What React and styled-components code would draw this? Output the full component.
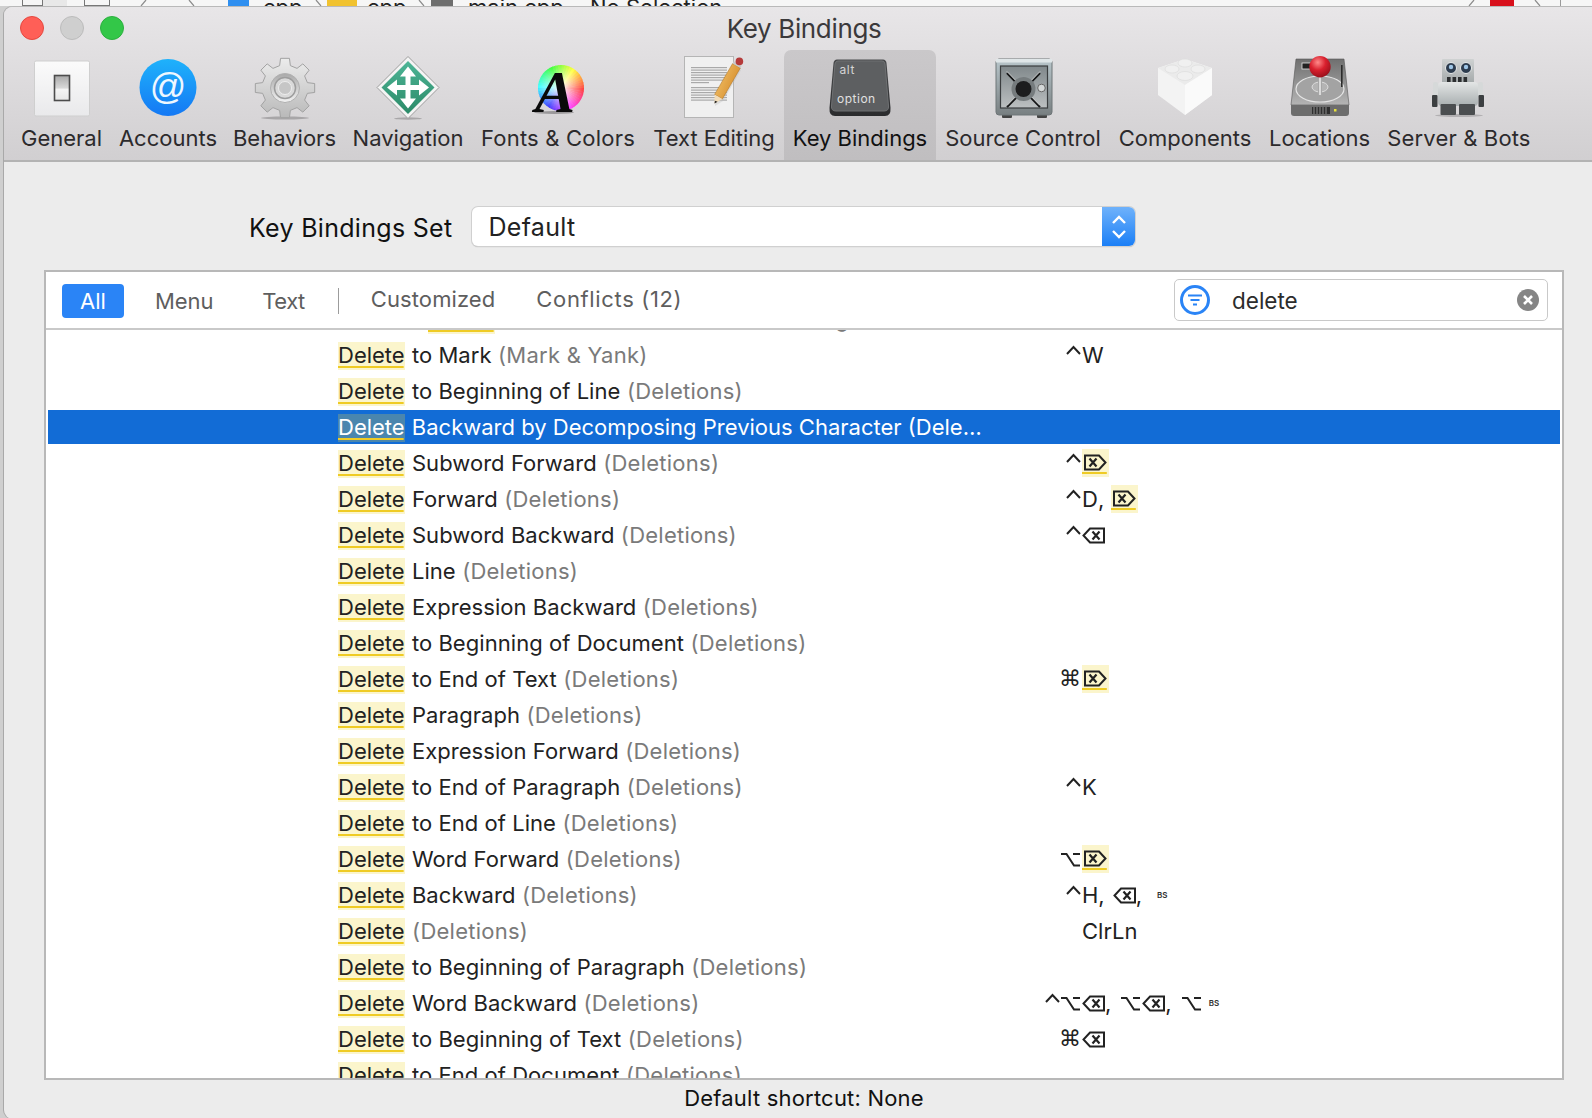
import React from 'react'
import styled, { createGlobalStyle } from 'styled-components'

const UI_FONT = `Inter, "Noto Sans", "Liberation Sans", sans-serif`

const GlobalStyle = createGlobalStyle`
  html, body { margin: 0; padding: 0; }
  body { background: #f6f6f6; font-family: ${UI_FONT}; }
`

const Page = styled.div`
  width: 1592px;
  height: 1118px;
  overflow: hidden;
  background: #cfcfcf;
`

/* the editor behind the preferences window, only its bottom edge shows */
const BehindStrip = styled.div`
  display: flex;
  height: 6px;
  overflow: hidden;
  background: #f6f6f6;
  font-size: 22px;
  color: #222;
`
const PeekText = styled.span`
  flex: none;
  width: ${p => p.$w}px;
  margin: -6px 0 0 ${p => p.$left}px;
  line-height: 26px;
  white-space: nowrap;
`
const PeekBox = styled.span`
  flex: none;
  box-sizing: border-box;
  width: ${p => p.$w}px;
  height: ${p => (p.$outline ? 12 : 6)}px;
  margin-left: ${p => p.$left}px;
  background: ${p => p.$color || 'transparent'};
  border: ${p => (p.$outline ? '1px solid #777' : 'none')};
  margin-top: ${p => (p.$outline ? -6 : 0)}px;
`
const PeekChevron = styled.svg`
  flex: none;
  width: 9px;
  height: 6px;
  margin-left: ${p => p.$left}px;
`

const Window = styled.div`
  margin-left: 4px;
  height: 1112px;
  display: flex;
  flex-direction: column;
  border-radius: 9px 0 0 9px;
  border-top: 1px solid #b9b9b9;
  box-shadow: -1px 0 0 #a9a9a9;
  overflow: hidden;
  background: #ececec;
`

const Header = styled.header`
  flex: none;
  height: 155px;
  box-sizing: border-box;
  border-bottom: 2px solid #b3b3b3;
  background: linear-gradient(#e8e6e8, #d1cfd1);
`
const TitleBar = styled.div`
  position: relative;
  height: 43px;
  padding-left: 12px;
  display: flex;
  align-items: center;
  justify-content: center;
  font-size: 26px;
  letter-spacing: -0.35px;
  color: #3b393b;
`
const Lights = styled.div`
  position: absolute;
  left: 16px;
  top: 9px;
  display: flex;
  gap: 16px;
`
const Light = styled.span`
  width: 24px;
  height: 24px;
  box-sizing: border-box;
  border-radius: 50%;
  background: ${p => p.$color};
  border: 1px solid ${p => p.$edge};
`

const Toolbar = styled.nav`
  display: flex;
  padding-left: 8px;
`
const ToolItem = styled.div`
  flex: none;
  width: ${p => p.$w}px;
  height: 110px;
  box-sizing: border-box;
  padding-top: 6px;
  display: flex;
  flex-direction: column;
  align-items: center;
  border-radius: 7px 7px 0 0;
  background: ${p => (p.$active ? 'linear-gradient(#cac8ca, #c0bec0)' : 'transparent')};
`
const ToolIcon = styled.svg`
  display: block;
  width: 64px;
  height: 64px;
`
const ToolLabel = styled.span`
  margin-top: 4px;
  font-size: 22px;
  line-height: 28px;
  white-space: nowrap;
  letter-spacing: ${p => p.$spacing || 0}px;
  color: ${p => (p.$active ? '#111' : '#2c2a2c')};
`

const Content = styled.main`
  flex: 1;
  min-height: 0;
  display: flex;
  flex-direction: column;
  padding: 45px 28px 0 40px;
`
const SetRow = styled.div`
  display: flex;
  align-items: center;
  padding-left: 205px;
  gap: 20px;
  height: 39px;
`
const SetLabel = styled.label`
  margin-top: 3px;
  font-size: 25px;
  letter-spacing: 0.3px;
  color: #111;
  white-space: nowrap;
`
const Select = styled.div`
  width: 663px;
  height: 39px;
  display: flex;
  border-radius: 6px;
  overflow: hidden;
  background: #fff;
  box-shadow: 0 0 0 1px #d0d0d0, 0 1px 1px #a8a8a8;
`
const SelectValue = styled.span`
  flex: 1;
  padding-left: 16px;
  font-size: 25px;
  letter-spacing: 0.3px;
  line-height: 41px;
  color: #222;
`
const SelectArrows = styled.span`
  width: 33px;
  display: flex;
  align-items: center;
  justify-content: center;
  background: linear-gradient(#6fb2fb, #1b7ff6);
`

const Panel = styled.section`
  flex: none;
  height: 810px;
  margin-top: 24px;
  box-sizing: border-box;
  display: flex;
  flex-direction: column;
  border: 2px solid #b8b8b8;
  background: #fff;
`
const FilterBar = styled.div`
  flex: none;
  height: 58px;
  box-sizing: border-box;
  display: flex;
  align-items: center;
  padding: 1px 14px 0 16px;
  border-bottom: 2px solid #c9c9c9;
`
const FilterAll = styled.span`
  width: 62px;
  height: 34px;
  display: flex;
  align-items: center;
  justify-content: center;
  border-radius: 4px;
  background: #2a84f6;
  color: #fff;
  font-size: 22px;
`
const FilterTab = styled.span`
  margin-left: ${p => p.$left}px;
  font-size: 22px;
  letter-spacing: ${p => p.$spacing || 0}px;
  position: relative;
  top: ${p => p.$top || 0}px;
  color: #5e5e5e;
  white-space: nowrap;
`
const FilterRule = styled.span`
  width: 1px;
  height: 26px;
  margin-left: 33px;
  background: #9c9c9c;
`
const SearchBox = styled.div`
  margin-left: auto;
  margin-top: -1px;
  width: 374px;
  height: 42px;
  box-sizing: border-box;
  display: flex;
  align-items: center;
  padding: 0 8px 0 4px;
  border: 1px solid #c9c9c9;
  border-radius: 5px;
`
const SearchText = styled.span`
  flex: 1;
  margin-left: 21px;
  font-size: 22.5px;
  color: #2c2c2c;
`

const List = styled.div`
  flex: 1;
  min-height: 0;
  overflow: hidden;
  padding: 0 2px;
`
const Rows = styled.div`
  display: flex;
  flex-direction: column;
  gap: 2px;
  margin-top: -28px;
`
const Row = styled.div`
  height: 34px;
  display: grid;
  grid-template-columns: 290px 703px 41px 1fr;
  align-items: center;
  font-size: 22px;
  line-height: 34px;
  white-space: nowrap;
  background: ${p => (p.$selected ? '#126cd6' : 'transparent')};
  color: ${p => (p.$selected ? '#fff' : '#222')};
`
const Name = styled.span`
  grid-column: 2;
  letter-spacing: ${p => (p.$selected ? 0 : 0.05)}px;
`
const Match = styled.span`
  padding-bottom: 2px;
  margin-left: ${p => p.$left || 0}px;
  margin-right: 1px;
  letter-spacing: 0;
  background:
    linear-gradient(#efcb24, #efcb24) 0 calc(100% - 2px) / 98% 2px no-repeat,
    ${p => (p.$selected ? '#4a86ae' : '#fbf5cc')};
`
const Category = styled.span`
  letter-spacing: 0.25px;
  color: #7a7a7a;
`
const Mods = styled.span`
  grid-column: 3;
  display: flex;
  align-items: center;
  justify-content: flex-end;
`
const Keys = styled.span`
  grid-column: 4;
  display: flex;
  align-items: center;
`
const Glyph = styled.span`
  font-family: "DejaVu Sans", sans-serif;
  font-size: ${p => p.$size || 18}px;
  line-height: 1;
`
const Comma = styled.span`
  margin-right: ${p => p.$gap}px;
`
const KeyHighlight = styled.span`
  display: inline-flex;
  align-items: center;
  height: 28px;
  box-sizing: border-box;
  padding: 0 2px 1px;
  background:
    linear-gradient(#efcb24, #efcb24) 0 calc(100% - 3px) / 92% 2px no-repeat,
    #fbf5cc;
`
const TinyKey = styled.span`
  font-size: 8px;
  font-weight: 600;
  margin-left: ${p => p.$left}px;
  color: #333;
`

const Status = styled.footer`
  flex: 1;
  display: flex;
  align-items: center;
  justify-content: center;
  padding: 0 0 4px;
  margin-top: 1px;
  font-size: 22px;
  letter-spacing: 0.2px;
  color: #111;
`

const ForwardDelete = () => (
  <svg width="23" height="17" viewBox="0 0 23 17" fill="none" stroke="#222" strokeWidth="2">
    <path d="M1 1.5H15L21.5 8.5L15 15.5H1Z" />
    <path d="M5.5 4.5L12.5 12.5M12.5 4.5L5.5 12.5" strokeWidth="2.2" />
  </svg>
)
const BackDelete = () => (
  <svg width="23" height="17" viewBox="0 0 23 17" fill="none" stroke="#222" strokeWidth="2">
    <path d="M22 1.5H8L1.5 8.5L8 15.5H22Z" />
    <path d="M10.5 4.5L17.5 12.5M17.5 4.5L10.5 12.5" strokeWidth="2.2" />
  </svg>
)
const OptionGlyph = () => (
  <svg width="19" height="15" viewBox="0 0 19 15" fill="none" stroke="#222" strokeWidth="2" style={{ marginRight: 2 }}>
    <path d="M0 2H5.5L13 13.5H19M12 2H19" />
  </svg>
)
const CtrlGlyph = () => (
  <svg width="17" height="15" viewBox="0 0 17 15" fill="none" stroke="#222" strokeWidth="2" style={{ marginTop: -8 }}>
    <path d="M2 10L8.5 3L15 10" />
  </svg>
)
const CmdGlyph = () => <Glyph $size={22} style={{ marginRight: 1 }}>⌘</Glyph>

const rows = [
  { before: 'Cut and ', beforeGap: 2, name: ' Selected Line and Mark', cat: '(Marking Text)' },
  { name: ' to Mark', cat: '(Mark & Yank)', mods: <CtrlGlyph />, keys: 'W' },
  { name: ' to Beginning of Line', cat: '(Deletions)' },
  { name: ' Backward by Decomposing Previous Character (Dele…', selected: true },
  { name: ' Subword Forward', cat: '(Deletions)', mods: <CtrlGlyph />, keys: <KeyHighlight><ForwardDelete /></KeyHighlight> },
  {
    name: ' Forward',
    cat: '(Deletions)',
    mods: <CtrlGlyph />,
    keys: <>D<Comma $gap={7}>,</Comma><KeyHighlight><ForwardDelete /></KeyHighlight></>,
  },
  { name: ' Subword Backward', cat: '(Deletions)', mods: <CtrlGlyph />, keys: <BackDelete /> },
  { name: ' Line', cat: '(Deletions)' },
  { name: ' Expression Backward', cat: '(Deletions)' },
  { name: ' to Beginning of Document', cat: '(Deletions)' },
  { name: ' to End of Text', cat: '(Deletions)', mods: <CmdGlyph />, keys: <KeyHighlight><ForwardDelete /></KeyHighlight> },
  { name: ' Paragraph', cat: '(Deletions)' },
  { name: ' Expression Forward', cat: '(Deletions)' },
  { name: ' to End of Paragraph', cat: '(Deletions)', mods: <CtrlGlyph />, keys: 'K' },
  { name: ' to End of Line', cat: '(Deletions)' },
  { name: ' Word Forward', cat: '(Deletions)', mods: <OptionGlyph />, keys: <KeyHighlight><ForwardDelete /></KeyHighlight> },
  {
    name: ' Backward',
    cat: '(Deletions)',
    mods: <CtrlGlyph />,
    keys: <>H<Comma $gap={8}>,</Comma><BackDelete /><Comma $gap={0}>,</Comma><TinyKey $left={15}>BS</TinyKey></>,
  },
  { name: '', cat: '(Deletions)', keys: 'ClrLn' },
  { name: ' to Beginning of Paragraph', cat: '(Deletions)' },
  {
    name: ' Word Backward',
    cat: '(Deletions)',
    mods: <><CtrlGlyph /><OptionGlyph /></>,
    keys: (
      <>
        <BackDelete /><Comma $gap={10}>,</Comma>
        <OptionGlyph /><BackDelete /><Comma $gap={10}>,</Comma>
        <OptionGlyph /><TinyKey $left={6}>BS</TinyKey>
      </>
    ),
  },
  { name: ' to Beginning of Text', cat: '(Deletions)', mods: <CmdGlyph />, keys: <BackDelete /> },
  { name: ' to End of Document', cat: '(Deletions)' },
]

const gearPath = (cx, cy, outer, inner, teeth) => {
  const pts = []
  const step = (Math.PI * 2) / teeth
  for (let i = 0; i < teeth; i++) {
    const a = i * step - Math.PI / 2
    const polar = (r, t) => `${(cx + r * Math.cos(t)).toFixed(2)} ${(cy + r * Math.sin(t)).toFixed(2)}`
    pts.push(polar(inner, a - step * 0.3), polar(outer, a - step * 0.19), polar(outer, a + step * 0.19), polar(inner, a + step * 0.3))
  }
  return `M${pts.join('L')}Z`
}

const wedge = (cx, cy, r, a0, a1) => {
  const p = a => `${(cx + r * Math.sin(a)).toFixed(2)} ${(cy - r * Math.cos(a)).toFixed(2)}`
  return `M${cx} ${cy}L${p(a0)}A${r} ${r} 0 0 1 ${p(a1)}Z`
}

const GeneralIcon = () => (
  <ToolIcon viewBox="0 0 64 64">
    <defs>
      <linearGradient id="genBg" x1="0" y1="0" x2="0" y2="1">
        <stop offset="0" stopColor="#fbfbfb" />
        <stop offset="1" stopColor="#e9e9eb" />
      </linearGradient>
      <linearGradient id="genSw" x1="0" y1="0" x2="0" y2="1">
        <stop offset="0" stopColor="#a9a9a9" />
        <stop offset="0.5" stopColor="#d8d8d8" />
        <stop offset="0.55" stopColor="#f4f4f4" />
        <stop offset="1" stopColor="#e6e6e6" />
      </linearGradient>
    </defs>
    <rect x="4.5" y="5" width="55" height="55" rx="1.5" fill="url(#genBg)" stroke="#cfcfcf" />
    <rect x="24.5" y="19.5" width="15" height="25" fill="url(#genSw)" stroke="#4c4c4c" strokeWidth="1.6" />
  </ToolIcon>
)

const AccountsIcon = () => (
  <ToolIcon viewBox="0 0 64 64">
    <defs>
      <linearGradient id="accBg" x1="0" y1="0" x2="0" y2="1">
        <stop offset="0" stopColor="#1fb2fb" />
        <stop offset="1" stopColor="#1478f4" />
      </linearGradient>
    </defs>
    <circle cx="32" cy="31.5" r="28.5" fill="url(#accBg)" />
    <text x="32" y="43" textAnchor="middle" fontFamily="Liberation Sans, sans-serif" fontSize="36" fill="#eef7ff">@</text>
  </ToolIcon>
)

const BehaviorsIcon = () => (
  <ToolIcon viewBox="0 0 64 64">
    <defs>
      <linearGradient id="gearBg" x1="0" y1="0" x2="0" y2="1">
        <stop offset="0" stopColor="#ececec" />
        <stop offset="1" stopColor="#b9b9b9" />
      </linearGradient>
      <linearGradient id="gearIn" x1="0" y1="0" x2="0" y2="1">
        <stop offset="0" stopColor="#a9a9a9" />
        <stop offset="1" stopColor="#f2f2f2" />
      </linearGradient>
    </defs>
    <ellipse cx="32" cy="62" rx="24" ry="1.5" fill="#a8a6a8" />
    <path d={gearPath(32, 32, 30, 23, 8)} fill="url(#gearBg)" stroke="#a2a2a2" />
    <circle cx="32" cy="32" r="14.5" fill="url(#gearIn)" stroke="#b0b0b0" />
    <circle cx="32" cy="32" r="10.5" fill="#d9d9d9" stroke="#9d9d9d" strokeWidth="1.5" />
    <circle cx="32" cy="32" r="6.5" fill="#c6c6c6" stroke="#ededed" />
  </ToolIcon>
)

const NavigationIcon = () => (
  <ToolIcon viewBox="0 0 64 64">
    <defs>
      <linearGradient id="navBg" x1="0" y1="0" x2="0" y2="1">
        <stop offset="0" stopColor="#4db596" />
        <stop offset="1" stopColor="#2b8a68" />
      </linearGradient>
    </defs>
    <ellipse cx="32" cy="62.5" rx="14" ry="1.2" fill="#a8a6a8" />
    <path d="M32 0.5L63 31.5L32 62.5L1 31.5Z" fill="#f4f4f4" stroke="#9c9c9c" />
    <path d="M32 5L58.5 31.5L32 58L5.5 31.5Z" fill="url(#navBg)" />
    <path
      d="M32 10.5L40 20.5H34.5V29H43V23.5L53 31.5L43 39.5V34H34.5V42.5H40L32 52.5L24 42.5H29.5V34H21V39.5L11 31.5L21 23.5V29H29.5V20.5H24Z"
      fill="#fff"
    />
  </ToolIcon>
)

const FontsIcon = () => {
  const wedges = []
  for (let i = 0; i < 48; i++) {
    const a0 = (i / 48) * Math.PI * 2
    const a1 = ((i + 1.2) / 48) * Math.PI * 2
    const hue = (90 - (i / 48) * 360 + 360) % 360
    wedges.push(<path key={i} d={wedge(35, 32, 23, a0, a1)} fill={`hsl(${hue} 100% 62%)`} />)
  }
  return (
    <ToolIcon viewBox="0 0 64 64">
      <defs>
        <radialGradient id="wheelFade">
          <stop offset="0" stopColor="#fff" stopOpacity="0.95" />
          <stop offset="1" stopColor="#fff" stopOpacity="0" />
        </radialGradient>
      </defs>
      {wedges}
      <circle cx="35" cy="32" r="23" fill="url(#wheelFade)" />
      <ellipse cx="28" cy="56.5" rx="20" ry="1.5" fill="#9a989a" />
      <text x="9" y="56" fontFamily="Liberation Serif, serif" fontStyle="italic" fontWeight="700" fontSize="60" fill="#0a0a0a">A</text>
    </ToolIcon>
  )
}

const TextEditingIcon = () => {
  const lines = [11, 13.5, 16, 18.5, 21, 23.5, 26, 31, 33.5, 36, 38.5, 41, 43.5]
  return (
    <ToolIcon viewBox="0 0 64 64">
      <defs>
        <linearGradient id="pencilBody" x1="0" y1="0" x2="1" y2="0.6">
          <stop offset="0" stopColor="#f6cb74" />
          <stop offset="1" stopColor="#d58a28" />
        </linearGradient>
      </defs>
      <rect x="2.5" y="0.5" width="49" height="61" fill="#f0f0f0" stroke="#b5b5b5" />
      {lines.map((y, i) => (
        <rect key={y} x="9" y={y} width={i % 7 === 6 ? 18 : 36} height="1.2" fill="#a9a9a9" />
      ))}
      <path d="M33 50L41 45L59 14L51 9.5L33 40Z" fill="#b9b9b9" opacity="0.35" />
      <path d="M32.6 38.4L40.4 42.9L58.4 12L50.6 7.5Z" fill="url(#pencilBody)" stroke="#a96f20" strokeWidth="0.5" />
      <path d="M32.6 38.4L40.4 42.9L32.5 47.5Z" fill="#f2dcb8" />
      <path d="M32.9 44.8L35.6 45.7L32.5 47.5Z" fill="#222" />
      <path d="M50.6 7.5L58.4 12L59.6 9.8L51.8 5.3Z" fill="#c9c9c9" />
      <circle cx="57.4" cy="5.4" r="3.8" fill="#b53a3a" />
    </ToolIcon>
  )
}

const KeyBindingsIcon = () => (
  <ToolIcon viewBox="0 0 64 64">
    <defs>
      <linearGradient id="keyEdge" x1="0" y1="0" x2="0" y2="1">
        <stop offset="0" stopColor="#4a4b4d" />
        <stop offset="1" stopColor="#2b2c2e" />
      </linearGradient>
    </defs>
    <path d="M9 3.5H55Q58 3.5 58.5 7L62.5 52Q63 60 57 60H7Q1 60 1.5 52L5.5 7Q6 3.5 9 3.5Z" fill="url(#keyEdge)" />
    <path d="M10 5H54Q56.5 5 57 8L60.5 50Q61 55 56 55H8Q3 55 3.5 50L7 8Q7.5 5 10 5Z" fill="#5d5f61" stroke="#6f7173" />
    <text x="11.5" y="18" fontFamily="Inter, sans-serif" fontSize="12" letterSpacing="0.6" fill="#d4d4d4">alt</text>
    <text x="9" y="47" fontFamily="Inter, sans-serif" fontSize="12" letterSpacing="0.5" fill="#e0e0e0">option</text>
  </ToolIcon>
)

const SourceControlIcon = () => (
  <ToolIcon viewBox="0 0 64 64">
    <defs>
      <linearGradient id="safeBg" x1="0" y1="0" x2="0" y2="1">
        <stop offset="0" stopColor="#b9c7cc" />
        <stop offset="1" stopColor="#787f81" />
      </linearGradient>
      <linearGradient id="safeDoor" x1="0" y1="0" x2="0" y2="1">
        <stop offset="0" stopColor="#80888b" />
        <stop offset="1" stopColor="#bcc0c1" />
      </linearGradient>
    </defs>
    <rect x="11" y="58" width="10" height="4" rx="1" fill="#444" />
    <rect x="46" y="58" width="10" height="4" rx="1" fill="#444" />
    <rect x="5" y="3" width="56" height="56" rx="3" fill="url(#safeBg)" stroke="#6f7678" />
    <rect x="5" y="3" width="56" height="3.5" fill="#dfe6e8" />
    <rect x="9.5" y="10" width="47" height="42" fill="url(#safeDoor)" stroke="#3a3d3f" strokeWidth="1.2" />
    <g stroke="#161718" strokeWidth="2.2">
      <path d="M16 17L49 51M49 17L16 51" />
    </g>
    <g stroke="#eef0f0" strokeWidth="0.8">
      <path d="M16 15.5L49 49.5M49 15.5L16 49.5" />
    </g>
    <circle cx="32.5" cy="33" r="12" fill="#767c7e" />
    <circle cx="32.5" cy="33" r="8" fill="#1c1d1e" />
    <circle cx="50.5" cy="32" r="3.8" fill="#d4d8d8" stroke="#666" />
  </ToolIcon>
)

const ComponentsIcon = () => (
  <ToolIcon viewBox="0 0 64 64">
    <path d="M32 3L59 12V39L32 59L5 39V12Z" fill="#f3f3f3" />
    <path d="M5 12L32 29L59 12L32 3Z" fill="#ebebeb" />
    <path d="M32 29V59L59 39V12Z" fill="#fafafa" />
    <g fill="#f0f0f0" stroke="#dcdcdc" strokeWidth="0.7">
      <ellipse cx="32" cy="7" rx="7" ry="4" />
      <ellipse cx="19" cy="13" rx="7" ry="4" />
      <ellipse cx="45" cy="13" rx="7" ry="4" />
      <ellipse cx="32" cy="20" rx="8" ry="4.5" />
    </g>
  </ToolIcon>
)

const LocationsIcon = () => (
  <ToolIcon viewBox="0 0 64 64">
    <defs>
      <linearGradient id="diskBg" x1="0" y1="0" x2="0" y2="1">
        <stop offset="0" stopColor="#6f6f6f" />
        <stop offset="1" stopColor="#b4b4b4" />
      </linearGradient>
      <radialGradient id="ball" cx="0.4" cy="0.3" r="0.8">
        <stop offset="0" stopColor="#ff8a8a" />
        <stop offset="0.45" stopColor="#d9202e" />
        <stop offset="1" stopColor="#8a0d17" />
      </radialGradient>
      <linearGradient id="stick" x1="0" y1="0" x2="1" y2="0">
        <stop offset="0" stopColor="#8c8c8c" />
        <stop offset="0.5" stopColor="#f4f4f4" />
        <stop offset="1" stopColor="#8c8c8c" />
      </linearGradient>
    </defs>
    <path d="M8 3H56L61 49H3Z" fill="url(#diskBg)" stroke="#555" strokeWidth="0.6" />
    <path d="M3 49H61V57Q61 60 58 60H6Q3 60 3 57Z" fill="#6d6d6d" />
    <ellipse cx="32" cy="33" rx="24" ry="13" fill="#a3a3a3" stroke="#e4e4e4" strokeWidth="1.2" />
    <ellipse cx="32" cy="31" rx="8" ry="5" fill="#b4b4b4" stroke="#dcdcdc" />
    <rect x="14" y="7" width="10" height="6" fill="#222" stroke="#e6e6e6" strokeWidth="0.8" />
    <rect x="53" y="9" width="1.6" height="22" fill="#2c2c2c" />
    <rect x="24" y="51" width="18" height="7" fill="#2f2f2f" />
    <g stroke="#8c8c8c" strokeWidth="1">
      <path d="M26 51V58M29 51V58M32 51V58M35 51V58M38 51V58" />
    </g>
    <rect x="46" y="53" width="2.5" height="2.5" fill="#e8e23a" />
    <rect x="30" y="18" width="4" height="21" fill="url(#stick)" />
    <circle cx="32" cy="10.7" r="10.7" fill="url(#ball)" />
  </ToolIcon>
)

const ServerBotsIcon = () => (
  <ToolIcon viewBox="0 0 64 64">
    <defs>
      <linearGradient id="botBody" x1="0" y1="0" x2="0" y2="1">
        <stop offset="0" stopColor="#e4e6e6" />
        <stop offset="1" stopColor="#a8aeaf" />
      </linearGradient>
      <linearGradient id="botHead" x1="0" y1="0" x2="0" y2="1">
        <stop offset="0" stopColor="#cfd2d2" />
        <stop offset="1" stopColor="#a4a9aa" />
      </linearGradient>
    </defs>
    <ellipse cx="32" cy="59.5" rx="24" ry="1.5" fill="#b2b0b2" />
    <rect x="6" y="26" width="5" height="16" rx="2" fill="#d6d9d9" />
    <rect x="51" y="26" width="5" height="16" rx="2" fill="#d6d9d9" />
    <rect x="5" y="39" width="5.5" height="12" rx="1" fill="#3c3f41" />
    <rect x="51.5" y="39" width="5.5" height="12" rx="1" fill="#3c3f41" />
    <rect x="15" y="3" width="32" height="24" rx="1" fill="url(#botHead)" />
    <circle cx="24" cy="12" r="5.5" fill="#2d3c4e" stroke="#e8eaea" strokeWidth="1" />
    <circle cx="39" cy="12" r="5.5" fill="#2d3c4e" stroke="#e8eaea" strokeWidth="1" />
    <circle cx="24" cy="11" r="2.2" fill="#9fc6e6" />
    <circle cx="39" cy="11" r="2.2" fill="#9fc6e6" />
    <g fill="#2c2e30">
      <rect x="20" y="21" width="3.6" height="5" />
      <rect x="25.5" y="21" width="3.6" height="5" />
      <rect x="31" y="21" width="3.6" height="5" />
      <rect x="36.5" y="21" width="3.6" height="5" />
    </g>
    <rect x="11" y="26" width="40" height="24" rx="4" fill="url(#botBody)" />
    <rect x="13.5" y="48" width="15.5" height="11" rx="1" fill="#4b4e50" />
    <rect x="32" y="48" width="16" height="11" rx="1" fill="#4b4e50" />
  </ToolIcon>
)

const tools = [
  { label: 'General', w: 99, Icon: GeneralIcon },
  { label: 'Accounts', w: 114, Icon: AccountsIcon },
  { label: 'Behaviors', w: 119, Icon: BehaviorsIcon },
  { label: 'Navigation', w: 128, Icon: NavigationIcon },
  { label: 'Fonts & Colors', w: 172, Icon: FontsIcon, spacing: 0.2 },
  { label: 'Text Editing', w: 140, Icon: TextEditingIcon },
  { label: 'Key Bindings', w: 152, Icon: KeyBindingsIcon, active: true },
  { label: 'Source Control', w: 174, Icon: SourceControlIcon },
  { label: 'Components', w: 150, Icon: ComponentsIcon },
  { label: 'Locations', w: 119, Icon: LocationsIcon },
  { label: 'Server & Bots', w: 160, Icon: ServerBotsIcon, spacing: 0.15 },
]

const Slash = ({ left, back }) => (
  <PeekChevron $left={left} viewBox="0 0 9 6" fill="none" stroke="#8a8a8a" strokeWidth="1.2">
    <path d={back ? 'M1 0L6 6' : 'M8 0L3 6'} />
  </PeekChevron>
)

const App = () => (
  <Page>
    <GlobalStyle />
    <BehindStrip>
      <PeekBox $left={22} $w={21} $outline />
      <PeekBox $left={0} $w={24} $color="#e8e8e8" />
      <PeekBox $left={17} $w={26} $outline />
      <Slash left={28} />
      <Slash left={41} back />
      <PeekBox $left={31} $w={21} $color="#2f8ff0" />
      <PeekText $left={14} $w={37}>cpp</PeekText>
      <Slash left={15} back />
      <PeekBox $left={3} $w={30} $color="#f1c22f" />
      <PeekText $left={10} $w={36}>cpp</PeekText>
      <Slash left={15} back />
      <PeekBox $left={4} $w={22} $color="#6e6e6e" />
      <PeekText $left={15} $w={106}>main.cpp</PeekText>
      <PeekText $left={16} $w={133}>No Selection</PeekText>
      <Slash left={743} />
      <PeekBox $left={15} $w={24} $color="#d8101c" />
      <Slash left={20} back />
      <PeekBox $left={17} $w={1} $color="#9a9a9a" />
    </BehindStrip>
    <Window>
      <Header>
        <TitleBar>
          <Lights>
            <Light $color="#ff5f57" $edge="#e5483f" />
            <Light $color="#cfcfcf" $edge="#bcbcbc" />
            <Light $color="#33c748" $edge="#2bb03e" />
          </Lights>
          Key Bindings
        </TitleBar>
        <Toolbar>
          {tools.map(({ label, w, Icon, active, spacing }) => (
            <ToolItem key={label} $w={w} $active={active}>
              <Icon />
              <ToolLabel $active={active} $spacing={spacing}>{label}</ToolLabel>
            </ToolItem>
          ))}
        </Toolbar>
      </Header>
      <Content>
        <SetRow>
          <SetLabel>Key Bindings Set</SetLabel>
          <Select>
            <SelectValue>Default</SelectValue>
            <SelectArrows>
              <svg width="18" height="28" viewBox="0 0 18 28" fill="none" stroke="#fff" strokeWidth="2.4">
                <path d="M3 10L9 4L15 10M3 18L9 24L15 18" />
              </svg>
            </SelectArrows>
          </Select>
        </SetRow>
        <Panel>
          <FilterBar>
            <FilterAll>All</FilterAll>
            <FilterTab $left={31} $spacing={-0.1}>Menu</FilterTab>
            <FilterTab $left={49} $spacing={-0.5}>Text</FilterTab>
            <FilterRule />
            <FilterTab $left={32} $top={-2} $spacing={0.1}>Customized</FilterTab>
            <FilterTab $left={41} $top={-2} $spacing={0.65}>Conflicts (12)</FilterTab>
            <SearchBox>
              <svg width="32" height="32" viewBox="0 0 32 32" fill="none">
                <circle cx="16" cy="16" r="13.5" stroke="#2a84f6" strokeWidth="3" />
                <path d="M9 11.5H23M11.5 16H20.5M14 20.5H18" stroke="#2a84f6" strokeWidth="2" />
              </svg>
              <SearchText>delete</SearchText>
              <svg width="22" height="22" viewBox="0 0 22 22">
                <circle cx="11" cy="11" r="11" fill="#858585" />
                <path d="M7 7L15 15M15 7L7 15" stroke="#fff" strokeWidth="2.6" />
              </svg>
            </SearchBox>
          </FilterBar>
          <List>
            <Rows>
              {rows.map((row, i) => (
                <Row key={i} $selected={row.selected}>
                  <Name $selected={row.selected}>
                    {row.before}
                    <Match $selected={row.selected} $left={row.beforeGap}>Delete</Match>
                    {row.name}
                    {row.cat && <Category> {row.cat}</Category>}
                  </Name>
                  {row.mods && <Mods>{row.mods}</Mods>}
                  {row.keys && <Keys>{row.keys}</Keys>}
                </Row>
              ))}
            </Rows>
          </List>
        </Panel>
        <Status>Default shortcut: None</Status>
      </Content>
    </Window>
  </Page>
)

export default App
